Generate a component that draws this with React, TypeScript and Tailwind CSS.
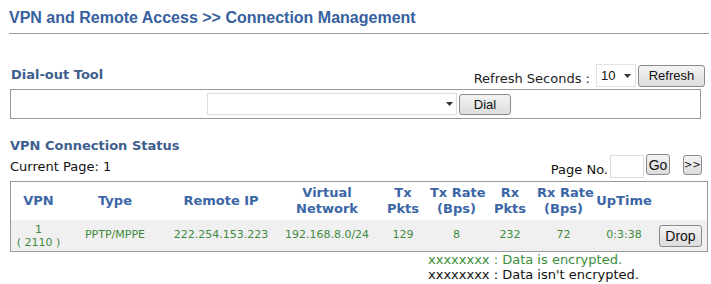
import React from "react";

const V = { fontFamily: '"DejaVu Sans", Verdana, sans-serif' };
const A = { fontFamily: '"Liberation Sans", Arial, sans-serif' };

function Btn({ children, className = "" }: { children: React.ReactNode; className?: string }) {
  return (
    <button
      style={A}
      className={`border border-[#8a8a8a] rounded-[3px] bg-gradient-to-b from-[#f4f4f4] to-[#dcdcdc] text-[13px] leading-none text-[#111] ${className}`}
    >
      {children}
    </button>
  );
}

function Arrow() {
  return (
    <svg width="7" height="4" viewBox="0 0 7 4">
      <path d="M0 0H7L3.5 4Z" fill="#333" />
    </svg>
  );
}

const cols = [55, 98, 114, 98, 54, 53, 54, 53, 68, 49];

export default function App() {
  const H = "font-bold text-[13px] leading-[16px] text-[#3b66a6] text-center align-middle whitespace-nowrap";
  const D = "text-[11px] text-[#3f8a3f] text-center align-middle whitespace-nowrap";
  return (
    <div className="w-[711px] h-[284px] bg-white relative overflow-hidden">
      <div className="pl-[9px] pt-[8px]">
        <div style={A} className="text-[16px] font-bold text-[#36609e] leading-[19px]">
          VPN and Remote Access &gt;&gt; Connection Management
        </div>
      </div>
      <div className="mx-[9px] mt-[6px] h-[1px] bg-[#999] w-[700px]" />

      <div className="flex items-end pl-[11px] pr-[6px] mt-[29px] h-[25px]" style={V}>
        <div className="font-bold text-[13px] text-[#3e5e8e] mb-[5px] leading-[16px]">Dial-out Tool</div>
        <div className="ml-auto flex items-center gap-[2px]">
          <span className="text-[13px] text-[#222] mr-[4px] mt-[5px]">Refresh Seconds :</span>
          <div style={A} className="w-[40px] h-[23px] flex items-center justify-between px-[4px] text-[13px] text-[#111] bg-white border border-[#e2e2e2]">
            <span>10</span>
            <Arrow />
          </div>
          <Btn className="w-[67px] h-[22px]">Refresh</Btn>
        </div>
      </div>

      <div className="mx-[10px] mt-[1px] h-[30px] border border-[#999] flex items-center">
        <div className="ml-[196px] w-[250px] h-[22px] border border-[#ddd] bg-white flex items-center justify-end pr-[3px]">
          <Arrow />
        </div>
        <Btn className="ml-[2px] w-[52px] h-[21px]">Dial</Btn>
      </div>

      <div style={V} className="pl-[10px] mt-[19px] font-bold text-[13px] text-[#3e5e8e] leading-[16px]">
        VPN Connection Status
      </div>
      <div className="flex items-end pl-[10px] pr-[9px] h-[27px]" style={V}>
        <span className="text-[13px] text-[#111] mb-[6px] leading-[16px]">Current Page: 1</span>
        <div className="ml-auto flex items-end mb-[3px]">
          <span className="text-[13px] text-[#111] mr-[2px] leading-[16px]">Page No.</span>
          <div className="w-[34px] h-[23px] border border-[#ddd] bg-white" />
          <Btn className="ml-[2px] w-[24px] h-[21px] mb-[3px] text-[14px]">Go</Btn>
          <button style={V} className="ml-[13px] w-[19px] h-[20px] mb-[3px] border border-[#8a8a8a] rounded-[3px] bg-gradient-to-b from-[#f4f4f4] to-[#dcdcdc] text-[10px] leading-none text-[#111]">
            &gt;&gt;
          </button>
        </div>
      </div>

      <div className="mx-[10px] w-[698px] border border-[#999]" style={V}>
        <table className="border-collapse table-fixed w-[696px]">
          <colgroup>
            {cols.map((w, i) => (
              <col key={i} style={{ width: w }} />
            ))}
          </colgroup>
          <tbody>
            <tr className="h-[38px]">
              <td className={H}>VPN</td>
              <td className={H}>Type</td>
              <td className={H}>Remote IP</td>
              <td className={H}>Virtual<br />Network</td>
              <td className={H}>Tx<br />Pkts</td>
              <td className={H}>Tx Rate<br />(Bps)</td>
              <td className={H}>Rx<br />Pkts</td>
              <td className={H}>Rx Rate<br />(Bps)</td>
              <td className={H}>UpTime</td>
              <td></td>
            </tr>
            <tr className="h-[31px] bg-[#f0f0f0]">
              <td className={`${D} leading-[13px]`}>1<br />( 2110 )</td>
              <td className={D}>PPTP/MPPE</td>
              <td className={D}>222.254.153.223</td>
              <td className={D}>192.168.8.0/24</td>
              <td className={D}>129</td>
              <td className={D}>8</td>
              <td className={D}>232</td>
              <td className={D}>72</td>
              <td className={D}>0:3:38</td>
              <td className="text-left align-middle">
                <Btn className="ml-[1px] w-[43px] h-[22px] text-[14px]">Drop</Btn>
              </td>
            </tr>
          </tbody>
        </table>
      </div>

      <div style={V} className="pl-[428px] text-[13px] leading-[15px]">
        <div className="text-[#3a8e3a]">xxxxxxxx : Data is encrypted.</div>
        <div className="text-[#111]">xxxxxxxx : Data isn't encrypted.</div>
      </div>
    </div>
  );
}
